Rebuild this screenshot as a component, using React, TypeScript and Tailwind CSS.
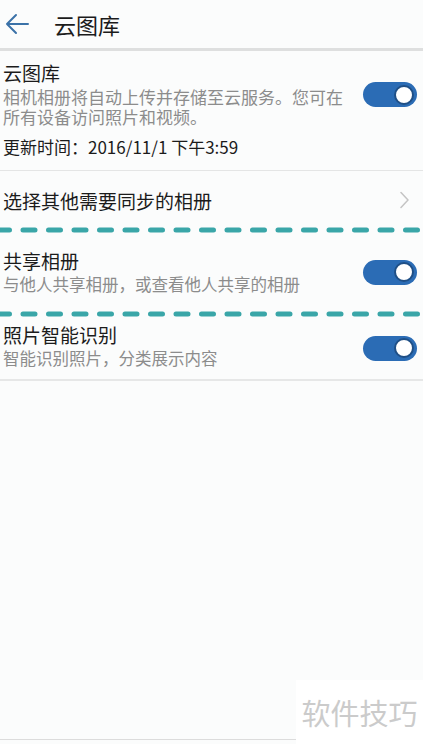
import React from 'react';

const font = { fontFamily: '"Noto Sans CJK SC", "Noto Sans", sans-serif' };

const Toggle: React.FC = () => (
  <div className="flex h-[25px] w-[54px] shrink-0 items-center justify-end rounded-full bg-[#2b6cb5] pr-[3px]">
    <div className="h-[20px] w-[20px] rounded-full border-2 border-[#1f4f86] bg-white" />
  </div>
);

const Dashes: React.FC = () => (
  <svg className="block h-[6px] w-full" viewBox="0 0 423 6" preserveAspectRatio="none">
    <line
      x1="-2.5"
      y1="3"
      x2="430"
      y2="3"
      stroke="#3aa6a8"
      strokeWidth="5"
      strokeLinecap="round"
      strokeDasharray="12 13.5"
    />
  </svg>
);

export default function App() {
  return (
    <div className="relative flex h-[744px] w-full flex-col overflow-hidden bg-[#fbfcfc]" style={font}>
      {/* header */}
      <div className="flex h-[48px] items-center">
        <svg className="ml-[4px] h-[24px] w-[26px]" viewBox="0 0 26 24" fill="none">
          <path d="M24 12H3M12 3L3 12l9 9" stroke="#3b72a8" strokeWidth="2" strokeLinecap="round" strokeLinejoin="round" />
        </svg>
        <span className="ml-[24px] text-[22px] leading-none text-[#1b1b1b]">云图库</span>
      </div>
      <div className="h-[3px] bg-[#dedfdf]" />

      {/* 云图库 */}
      <div className="flex items-start pl-[3px] pr-[6px] pt-[10px] pb-[13px]">
        <div className="min-w-0 flex-1">
          <div className="text-[19px] leading-[23px] text-[#1b1b1b]">云图库</div>
          <div className="mt-[3px] w-[340px] text-[17px] leading-[20px] text-[#8c8c8c]">
            相机相册将自动上传并存储至云服务。您可在所有设备访问照片和视频。
          </div>
          <div className="mt-[10px] text-[17px] leading-[20px] text-[#1b1b1b]">更新时间：2016/11/1 下午3:59</div>
        </div>
        <div className="mt-[21px]">
          <Toggle />
        </div>
      </div>
      <div className="h-px bg-[#e4e5e5]" />

      {/* 选择其他 */}
      <div className="flex h-[56px] items-center pl-[3px] pr-[14px] pt-[2px]">
        <span className="flex-1 text-[19px] leading-[23px] text-[#1b1b1b]">选择其他需要同步的相册</span>
        <svg className="h-[18px] w-[10px]" viewBox="0 0 10 18" fill="none">
          <path d="M2 1.5l7 7.5-7 7.5" stroke="#c4c4c4" strokeWidth="1.5" strokeLinecap="round" strokeLinejoin="round" />
        </svg>
      </div>
      <Dashes />

      {/* 共享相册 */}
      <div className="flex h-[78px] items-center pl-[3px] pr-[6px]">
        <div className="-mt-[2px] flex-1">
          <div className="text-[19px] leading-[23px] text-[#1b1b1b]">共享相册</div>
          <div className="mt-[2px] text-[16.5px] leading-[20px] text-[#8c8c8c]">与他人共享相册，或查看他人共享的相册</div>
        </div>
        <Toggle />
      </div>
      <Dashes />

      {/* 照片智能识别 */}
      <div className="flex h-[62px] items-center pl-[3px] pr-[6px]">
        <div className="-mt-[6px] flex-1">
          <div className="text-[19px] leading-[23px] text-[#1b1b1b]">照片智能识别</div>
          <div className="mt-[2px] text-[16.5px] leading-[20px] text-[#8c8c8c]">智能识别照片，分类展示内容</div>
        </div>
        <Toggle />
      </div>
      <div className="h-[2px] bg-[#e6e7e7]" />

      <div className="flex-1" />
      <div className="flex h-[64px] items-end">
        <div className="mb-[4px] h-px flex-1 bg-[#dcdcdc]" />
        <div className="flex h-full w-[127px] items-center justify-center bg-white">
          <span className="text-[29px] leading-none text-[#cbcbcb]">软件技巧</span>
        </div>
      </div>
    </div>
  );
}
